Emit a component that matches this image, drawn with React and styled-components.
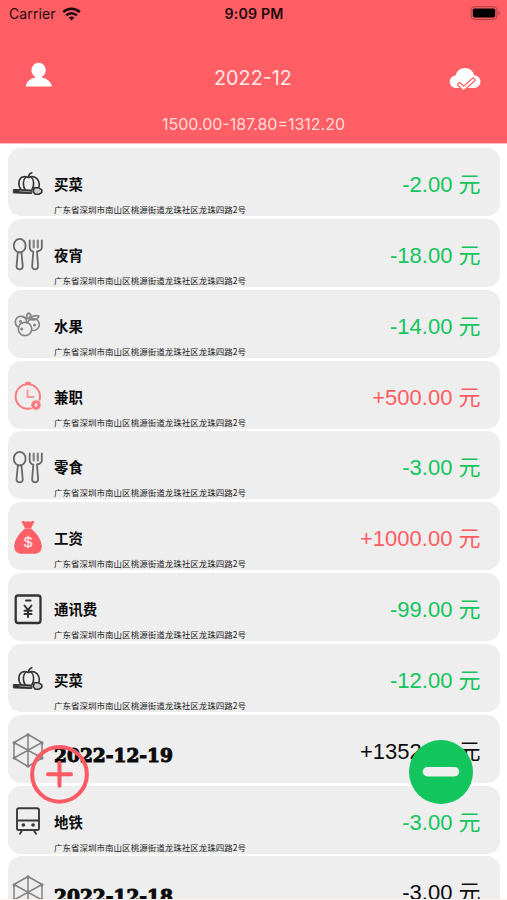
import React from 'react';
import styled, { createGlobalStyle } from 'styled-components';

const GlobalStyle = createGlobalStyle`
  * {
    box-sizing: border-box;
  }
  body {
    margin: 0;
    background: #fff;
    font-family: 'Liberation Sans', 'Noto Sans CJK SC', sans-serif;
  }
`;

const colors = {
  income: '#ff5c62',
  expense: '#12c55c',
  total: '#0c0c0c',
};

const Screen = styled.div`
  position: relative;
  display: flex;
  flex-direction: column;
  height: 900px;
  overflow: hidden;
  & svg {
    display: block;
  }
`;

const Header = styled.header`
  flex: none;
  height: 144px;
  background: #ff5e64;
  border-bottom: 1px solid #ffb9bc;
  font-family: Inter, sans-serif;
`;

const StatusBar = styled.div`
  display: grid;
  grid-template-columns: 1fr auto 1fr;
  align-items: center;
  height: 27px;
  padding: 0 6px 0 9px;
  color: #200b0c;
  font-size: 14px;
  & .carrier {
    display: flex;
    align-items: center;
    gap: 6px;
    letter-spacing: 0.1px;
  }
  & .time {
    margin-right: 2px;
    font-weight: 600;
    font-size: 14.2px;
    letter-spacing: 0.15px;
  }
  & .battery {
    justify-self: end;
    margin-top: -1px;
  }
`;

const NavBar = styled.div`
  display: grid;
  grid-template-columns: 1fr auto 1fr;
  align-items: center;
  height: 100px;
  padding: 0 26px 0 25px;
  margin-bottom: -18px;
  & .cloud {
    justify-self: end;
    margin-top: 4px;
  }
  & .user {
    margin-top: -5px;
  }
`;

const Month = styled.div`
  color: #ffeaea;
  font-size: 19.8px;
  margin-top: 1px;
`;

const Balance = styled.div`
  color: #ffdcdd;
  font-size: 16px;
  line-height: 31px;
  text-align: center;
`;

const List = styled.main`
  display: flex;
  flex-direction: column;
  gap: 2.85px;
  padding: 4px 7px 0 8px;
`;

const Card = styled.section`
  flex: none;
  display: grid;
  grid-template-columns: 40px 1fr auto;
  column-gap: 6px;
  height: 68px;
  padding-right: 19.5px;
  background: #eee;
  border-radius: 13px;
`;

const IconCell = styled.div`
  align-self: center;
  padding: 0 0 2px 4px;
`;

const Title = styled.div`
  padding-top: 26px;
  color: #0a0a0a;
  font-family: 'Noto Sans CJK SC', sans-serif;
  font-size: 14.4px;
  font-weight: 700;
  line-height: 20px;
`;

const DateTitle = styled(Title)`
  padding-top: 31px;
  font-family: 'DejaVu Serif', serif;
  font-size: 18.6px;
  -webkit-text-stroke: 1px #0a0a0a;
`;

const Address = styled.div`
  margin-top: 9px;
  color: #222;
  font-family: 'Noto Sans CJK SC', sans-serif;
  font-size: 8.52px;
  line-height: 12px;
  white-space: nowrap;
`;

const Amount = styled.div`
  color: ${props => colors[props.$kind]};
  font-size: 22px;
  line-height: 73px;
  white-space: nowrap;
`;

const FloatingButton = styled.button`
  position: absolute;
  left: ${props => props.$left}px;
  top: ${props => props.$top}px;
  padding: 0;
  border: 0;
  background: none;
`;

const BottomEdge = styled.div`
  position: absolute;
  left: 0;
  right: 0;
  bottom: 0;
  height: 1px;
  background: #faf4f4;
`;

const Icon = ({ color = '#333', width = 1.5, children }) => (
  <svg
    width="32"
    height="36"
    viewBox="0 0 32 36"
    fill="none"
    stroke={color}
    strokeWidth={width}
    strokeLinecap="round"
    strokeLinejoin="round"
  >
    {children}
  </svg>
);

const Pumpkin = () => (
  <Icon width={1.6}>
    <path d="M16.500 11c.2-2.400 1.300-3.700 3.300-4.200" />
    <path d="M9 23.500C5.500 19.500 6.500 12.500 10.500 11c2.300-.7 4.200-.4 6 .6 1.800-1 3.700-1.300 6-.6 4 1.500 5.500 6.500 4.500 10" />
    <path d="M13 23.500c-2.500-4-2-10 .5-12M20 23.500c2.500-4 2-10-.5-12" />
    <path d="M1.700 23.500h5l13 .6v3.400l-18-.6z" fill="#333" strokeWidth="1" />
    <path d="M7.500 25l11 .8" stroke="#999" strokeWidth="0.9" />
    <path d="M22.300 21.800h4.500l3 2v2.500l-2.500 1.900h-4l-2.200-2.500z" fill="#ccc" />
  </Icon>
);

const Cutlery = () => (
  <Icon color="#686868" width={1.8}>
    <path d="M5.900 16l-1.400 14.700c.5 3.500 5.800 3.500 6.300 0L9.400 16" />
    <ellipse cx="7.700" cy="9.700" rx="5.900" ry="6.800" />
    <path d="M17.700 4.500v7c0 2.300 1.600 3.500 3.600 4l-1.200 15.200c.5 3.500 5.500 3.500 6 0L25 15.500c2.500-.5 4.800-1.700 4.800-4v-7" />
    <path d="M21.700 4.500v7M25.800 4.500v7" strokeWidth="2.200" stroke="#858585" />
  </Icon>
);

const Fruit = () => (
  <Icon color="#858585" width={1.700}>
    <circle cx="9" cy="15" r="5.700" />
    <circle cx="21.300" cy="17.500" r="6" />
    <circle cx="13" cy="22" r="6.700" fill="#eee" />
    <path d="M15 11.500V7.500l2-1.500 2 2-2 3.500z" />
    <path d="M17.500 12.500c2-3 5-4.500 9.500-3.500-1.500 3.500-5 4.500-9.500 3.500zM11 9.500l4 2" />
    <path d="M8.500 14.500h.1M22.500 18h.1M9.700 22h.1" strokeWidth="3" />
  </Icon>
);

const PartTime = () => (
  <Icon color="#ff797e" width={2}>
    <circle cx="15.800" cy="18.500" r="12.200" />
    <path d="M14.500 5.200h3" strokeWidth="2.800" />
    <path d="M15.500 12.500v6.500h6" stroke="#ff9599" />
    <circle cx="24" cy="27" r="5.200" fill="#ff797e" stroke="#eee" strokeWidth="0.8" />
    <ellipse cx="24" cy="27" rx="1.400" ry="1.900" fill="#ffe3e4" stroke="none" />
  </Icon>
);

const MoneyBag = () => (
  <svg width="32" height="36" viewBox="0 0 32 36">
    <path
      d="M9.500 1.500c1.500-1 2.800 0 4.200.2 1.600-.7 3-.7 4.600 0 1.500-.2 2.700-1.200 4.200-.2L19 8.500c5.500 4.200 10.800 11.500 10.800 18 0 4.500-3 7.300-7.800 7.300H10c-4.800 0-7.800-2.800-7.800-7.300 0-6.500 5.300-13.800 10.800-18z"
      fill="#fe6067"
    />
    <path d="M13 8.500h6" stroke="#f79a9e" strokeWidth="0.8" />
    <text
      x="16"
      y="26.500"
      textAnchor="middle"
      fill="#fbe4e5"
      stroke="#fbe4e5"
      strokeWidth="0.3"
      fontSize="15.500"
      fontFamily="Liberation Sans, sans-serif"
    >
      $
    </text>
  </svg>
);

const Phone = () => (
  <Icon width={2.3}>
    <rect x="3.700" y="4.500" width="24.800" height="27.500" rx="2.500" />
    <path d="M14 9.500h4.500M12.500 14.500l3.500 4.500 3.500-4.500M16 19.500V26M12.500 19.700h7M12.500 23h7" strokeWidth="2" />
  </Icon>
);

const Hexagon = () => (
  <Icon color="#838383" width={1.5}>
    <path d="M16 2.500l14 8v15.500l-14 8.500L2 26V10.500zM16 2.500v32M2 10.500l28 15.500M30 10.500L2 26" />
    <path d="M16 3h.1M29.800 11h.1M29.800 26h.1M16 34h.1M2.200 26h.1M2.200 11h.1M16 18.400h.1" strokeWidth="3.400" />
  </Icon>
);

const Metro = () => (
  <Icon width={1.9} color="#3a3a3a">
    <path d="M7 5.200h18c1.400 0 2 .8 2 2V25.500c0 1-.7 1.500-1.700 1.500H6.700c-1 0-1.700-.5-1.700-1.500V7.200c0-1.200.7-2 2-2zM5 17.500h22M10 27.500l-2 3.300M22 27.500l2 3.300" />
    <path d="M11.300 22h.1M21 22h.1" strokeWidth="3.600" />
  </Icon>
);

const icons = {
  pumpkin: Pumpkin,
  cutlery: Cutlery,
  fruit: Fruit,
  partTime: PartTime,
  moneyBag: MoneyBag,
  phone: Phone,
  hexagon: Hexagon,
  metro: Metro,
};

const address = '广东省深圳市南山区桃源街道龙珠社区龙珠四路2号';

const records = [
  { icon: 'pumpkin', title: '买菜', amount: '-2.00', kind: 'expense' },
  { icon: 'cutlery', title: '夜宵', amount: '-18.00', kind: 'expense' },
  { icon: 'fruit', title: '水果', amount: '-14.00', kind: 'expense' },
  { icon: 'partTime', title: '兼职', amount: '+500.00', kind: 'income' },
  { icon: 'cutlery', title: '零食', amount: '-3.00', kind: 'expense' },
  { icon: 'moneyBag', title: '工资', amount: '+1000.00', kind: 'income' },
  { icon: 'phone', title: '通讯费', amount: '-99.00', kind: 'expense' },
  { icon: 'pumpkin', title: '买菜', amount: '-12.00', kind: 'expense' },
  { icon: 'hexagon', title: '2022-12-19', amount: '+1352.00', kind: 'total' },
  { icon: 'metro', title: '地铁', amount: '-3.00', kind: 'expense' },
  { icon: 'hexagon', title: '2022-12-18', amount: '-3.00', kind: 'total' },
];

const RecordCard = ({ icon, title, amount, kind }) => {
  const RecordIcon = icons[icon];
  return (
    <Card>
      <IconCell>
        <RecordIcon />
      </IconCell>
      {kind === 'total' ? (
        <DateTitle>{title}</DateTitle>
      ) : (
        <div>
          <Title>{title}</Title>
          <Address>{address}</Address>
        </div>
      )}
      <Amount $kind={kind}>{amount} 元</Amount>
    </Card>
  );
};

const Wifi = () => (
  <svg width="19" height="14" viewBox="0 0 19 14" fill="none" stroke="#200b0c" strokeWidth="2.500">
    <path d="M1.200 5.200c4.700-4.500 11.900-4.500 16.600 0M4.100 8.300c3.100-2.900 7.700-2.900 10.800 0" />
    <path d="M9.500 13.500L6.600 10.500c1.700-1.500 4.100-1.500 5.800 0z" fill="#200b0c" stroke="none" />
  </svg>
);

const Battery = () => (
  <svg className="battery" width="31" height="14" viewBox="0 0 31 14">
    <rect x="1" y="0.700" width="26" height="12.600" rx="3.500" fill="none" stroke="#a83d42" />
    <rect x="2.800" y="2.400" width="22.400" height="9.200" rx="1.800" fill="#000" />
    <path d="M28.500 4.800c1.800.6 1.800 3.800 0 4.400z" fill="#a83d42" />
  </svg>
);

const User = () => (
  <svg className="user" width="28" height="25" viewBox="0 0 28 25" fill="#fff">
    <ellipse cx="13.600" cy="8.200" rx="7.200" ry="7.400" />
    <path d="M10.500 13h6.200v2.500c5.300.8 9.300 4.300 10.300 9H.7c.8-4.700 4.500-8.200 9.800-9z" />
  </svg>
);

const Cloud = () => (
  <svg className="cloud" width="32" height="24" viewBox="0 0 32 24">
    <path
      d="M7.500 21C3.500 21 .7 18.300.7 14.700c0-3.500 2.600-6.200 6-6.300C7.500 4 11.500 1 16 1s8.300 3 9.200 7.300c3.700.2 6.300 2.900 6.300 6.300 0 3.600-2.700 6.400-6.500 6.400z"
      fill="#fff"
    />
    <path d="M10.500 17.500l4 4 9.700-8.500" fill="none" stroke="#ff5e64" strokeWidth="4.600" strokeLinecap="round" strokeLinejoin="round" />
    <path d="M10.500 17.500l4 4 9.700-8.500" fill="none" stroke="#fff" strokeWidth="2.300" strokeLinecap="round" strokeLinejoin="round" />
  </svg>
);

const App = () => (
  <Screen>
    <GlobalStyle />
    <Header>
      <StatusBar>
        <div className="carrier">
          Carrier
          <Wifi />
        </div>
        <div className="time">9:09 PM</div>
        <Battery />
      </StatusBar>
      <NavBar>
        <User />
        <Month>2022-12</Month>
        <Cloud />
      </NavBar>
      <Balance>1500.00-187.80=1312.20</Balance>
    </Header>
    <List>
      {records.map((record, index) => (
        <RecordCard key={index} {...record} />
      ))}
    </List>
    <FloatingButton $left={29} $top={744} aria-label="+">
      <svg width="61" height="61" viewBox="0 0 61 61" fill="none" stroke="#fb5b65" strokeWidth="4">
        <circle cx="30.500" cy="30.300" r="27.400" />
        <path d="M19 30.300h23M30.500 18.800v23" strokeLinecap="round" />
      </svg>
    </FloatingButton>
    <FloatingButton $left={409} $top={740} aria-label="-">
      <svg width="64" height="64" viewBox="0 0 64 64">
        <circle cx="32" cy="32" r="32" fill="#12c55c" />
        <rect x="13.700" y="27" width="36.600" height="9.500" rx="4.750" fill="#efefef" />
      </svg>
    </FloatingButton>
    <BottomEdge />
  </Screen>
);

export default App;
